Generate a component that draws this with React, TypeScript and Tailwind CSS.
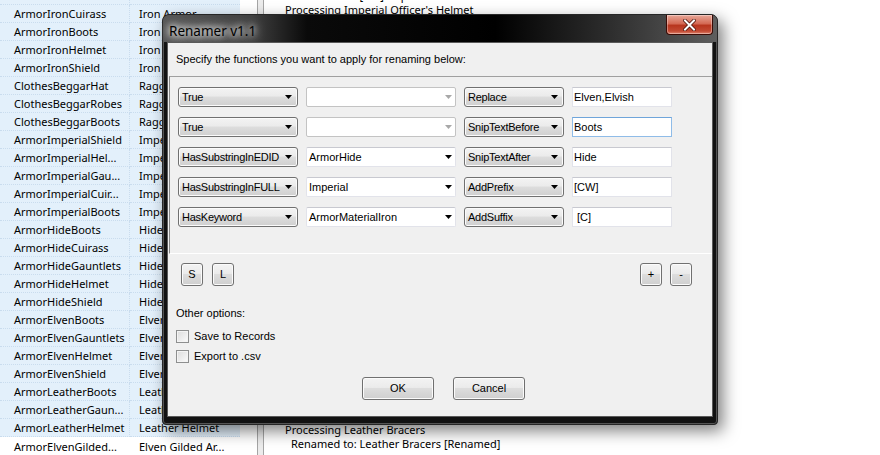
import React from 'react';

const rows: [string, string][] = [
  ['ArmorIronCuirass', 'Iron Armor'],
  ['ArmorIronBoots', 'Iron Boots'],
  ['ArmorIronHelmet', 'Iron Helmet'],
  ['ArmorIronShield', 'Iron Shield'],
  ['ClothesBeggarHat', 'Ragged Cap'],
  ['ClothesBeggarRobes', 'Ragged Robes'],
  ['ClothesBeggarBoots', 'Ragged Boots'],
  ['ArmorImperialShield', 'Imperial Shield'],
  ['ArmorImperialHel...', 'Imperial Helmet'],
  ['ArmorImperialGau...', 'Imperial Bracers'],
  ['ArmorImperialCuir...', 'Imperial Armor'],
  ['ArmorImperialBoots', 'Imperial Boots'],
  ['ArmorHideBoots', 'Hide Boots'],
  ['ArmorHideCuirass', 'Hide Armor'],
  ['ArmorHideGauntlets', 'Hide Bracers'],
  ['ArmorHideHelmet', 'Hide Helmet'],
  ['ArmorHideShield', 'Hide Shield'],
  ['ArmorElvenBoots', 'Elven Boots'],
  ['ArmorElvenGauntlets', 'Elven Gauntlets'],
  ['ArmorElvenHelmet', 'Elven Helmet'],
  ['ArmorElvenShield', 'Elven Shield'],
  ['ArmorLeatherBoots', 'Leather Boots'],
  ['ArmorLeatherGaun...', 'Leather Bracers'],
  ['ArmorLeatherHelmet', 'Leather Helmet'],
  ['ArmorElvenGilded...', 'Elven Gilded Ar...'],
];

const rules: [string, string, string, string, boolean][] = [
  ['True', '', 'Replace', 'Elven,Elvish', false],
  ['True', '', 'SnipTextBefore', 'Boots', true],
  ['HasSubstringInEDID', 'ArmorHide', 'SnipTextAfter', 'Hide', false],
  ['HasSubstringInFULL', 'Imperial', 'AddPrefix', '[CW]', false],
  ['HasKeyword', 'ArmorMaterialIron', 'AddSuffix', ' [C]', false],
];

const buttonFace =
  'border border-[#707070] rounded-[3px] bg-[linear-gradient(180deg,#f3f3f3_0%,#ebebeb_45%,#dddddd_50%,#cfcfcf_100%)] shadow-[inset_0_0_0_1px_#fbfbfb]';

function Arrow({ color = '#000' }: { color?: string }) {
  return (
    <svg width="7" height="4" viewBox="0 0 7 4" className="shrink-0">
      <polygon points="0,0 7,0 3.5,4" fill={color} />
    </svg>
  );
}

function DropList({ text, width }: { text: string; width: string }) {
  return (
    <div className={`flex h-[20px] ${width} items-center justify-between pl-[3px] pr-[5px] ${buttonFace}`}>
      <span className="whitespace-nowrap tracking-[-0.25px]">{text}</span>
      <Arrow />
    </div>
  );
}

function EditCombo({ text }: { text: string }) {
  const disabled = text === '';
  return (
    <div
      className={`flex h-[20px] w-[150px] items-center justify-between rounded-[2px] border bg-white pl-[2px] pr-[3px] ${
        disabled ? 'border-[#c3c3c3]' : 'border-[#e2e3ea] border-t-[#c8c9d0]'
      }`}
    >
      <span className="whitespace-nowrap">{text}</span>
      <Arrow color={disabled ? '#a8a8a8' : '#000'} />
    </div>
  );
}

function TextBox({ text, focused }: { text: string; focused: boolean }) {
  return (
    <div
      className={`flex h-[20px] w-[100px] items-center border bg-white pl-[1px] ${
        focused ? 'border-[#8fbce8] border-t-[#6fa5da]' : 'border-[#e2e3ea] border-t-[#c8c9d0]'
      }`}
    >
      <span className="whitespace-pre">{text}</span>
    </div>
  );
}

function SmallButton({ label }: { label: string }) {
  return (
    <div className={`flex h-[23px] w-[22px] items-center justify-center ${buttonFace}`}>{label}</div>
  );
}

function CheckBox({ label }: { label: string }) {
  return (
    <div className="flex h-[16px] items-center gap-[5px]">
      <div className="h-[13px] w-[13px] border border-[#8e8f8f] bg-[linear-gradient(135deg,#dcdcdc,#fbfbfb)] shadow-[inset_0_0_0_1px_#f4f4f4]" />
      <span>{label}</span>
    </div>
  );
}

function Dialog() {
  return (
    <div className="absolute left-[162px] top-[14px] flex h-[411px] w-[556px] flex-col rounded-t-[7px] rounded-b-[4px] border border-[#262626] bg-[#121212] shadow-[inset_0_0_0_1px_rgba(255,255,255,0.28),5px_6px_16px_rgba(0,0,0,0.5)]">
      <div className="flex h-[27px] justify-between rounded-t-[6px] bg-[linear-gradient(90deg,#555_0%,#404040_16%,#0a0a0a_26%,#000_60%,#2c2c2c_80%,#5e5e5e_100%)] pl-[6px] pr-[4px]">
        <span className="pt-[8px] text-[13.5px] leading-[16px] text-black [text-shadow:0_0_6px_#fff,0_0_10px_#fff,0_0_14px_#ddd]">
          Renamer v1.1
        </span>
        <div className="flex h-[20px] w-[47px] items-center justify-center rounded-b-[4px] border border-t-0 border-[#3b0b05] bg-[linear-gradient(180deg,#e8a899_0%,#d46a55_45%,#b8361f_55%,#c24a33_85%,#e08570_100%)] shadow-[inset_0_0_0_1px_rgba(255,255,255,0.35)]">
          <svg width="13" height="12" viewBox="0 0 13 12">
            <path d="M2 1.5 L11 10.5 M11 1.5 L2 10.5" stroke="#4a1208" strokeWidth="3.6" strokeLinecap="square" />
            <path d="M2 1.5 L11 10.5 M11 1.5 L2 10.5" stroke="#fff" strokeWidth="2" strokeLinecap="square" />
          </svg>
        </div>
      </div>
      <div className="mx-[4px] flex h-[375px] flex-col border border-[#5a5a5a] bg-[#f0f0f0] [font-family:'Liberation_Sans',Arial,sans-serif]">
        <div className="flex h-[33px] items-center pl-[8px]">Specify the functions you want to apply for renaming below:</div>
        <div className="ml-[1px] flex h-[178px] flex-col gap-[10px] border-l border-t border-b border-l-[#868686] border-t-[#a0a0a0] border-b-white pl-[8px] pt-[10px]">
          {rules.map(([cond, arg, fn, val, focused], i) => (
            <div key={i} className="flex gap-[8px]">
              <DropList text={cond} width="w-[120px]" />
              <EditCombo text={arg} />
              <DropList text={fn} width="w-[100px]" />
              <TextBox text={val} focused={focused} />
            </div>
          ))}
        </div>
        <div className="mt-[9px] flex justify-between pl-[13px] pr-[20px]">
          <div className="flex gap-[9px]">
            <SmallButton label="S" />
            <SmallButton label="L" />
          </div>
          <div className="flex gap-[8px]">
            <SmallButton label="+" />
            <SmallButton label="-" />
          </div>
        </div>
        <div className="mt-[20px] pl-[8px] leading-[15px]">Other options:</div>
        <div className="mt-[7px] flex flex-col gap-[4px] pl-[8px]">
          <CheckBox label="Save to Records" />
          <CheckBox label="Export to .csv" />
        </div>
        <div className="mt-[13px] flex gap-[19px] pl-[194px]">
          <div className={`flex h-[23px] w-[72px] items-center justify-center ${buttonFace}`}>OK</div>
          <div className={`flex h-[23px] w-[72px] items-center justify-center ${buttonFace}`}>Cancel</div>
        </div>
      </div>
    </div>
  );
}

export default function App() {
  return (
    <div className="relative flex h-[455px] w-[880px] overflow-hidden bg-white text-[11px] leading-[15px] text-black [font-family:'Noto_Sans',sans-serif]">
      <div className="flex w-[257px] flex-col">
        <div className="flex h-[5px]">
          <div className="w-[130px] border-r border-b border-dotted border-[#c9dcee] bg-[#e3f0fb]" />
          <div className="w-[110px] border-b border-dotted border-[#c9dcee] bg-[#e3f0fb]" />
        </div>
        {rows.map(([edid, name], i) => {
          const last = i === rows.length - 1;
          const bg = last ? 'bg-white' : 'bg-[#e3f0fb]';
          return (
            <div key={edid + i} className="flex h-[18px]">
              <div
                className={`flex w-[130px] items-center overflow-hidden whitespace-nowrap pl-[14px] ${bg} ${
                  last ? '' : 'border-r border-b border-dotted border-[#c9dcee]'
                }`}
              >
                {edid}
              </div>
              <div
                className={`flex w-[110px] items-center overflow-hidden whitespace-nowrap pl-[9px] ${bg} ${
                  last ? '' : 'border-b border-dotted border-[#c9dcee]'
                }`}
              >
                {name}
              </div>
            </div>
          );
        })}
      </div>
      <div className="w-[7px] border-x border-[#a5a5a5] bg-[#ececec]" />
      <div className="flex flex-1 flex-col pl-[21px] leading-[14px]">
        <div className="mt-[-11px]">
          <div className="pl-[6px]">Renamed to: [CW] Imperial Officer's Boots</div>
          <div>Processing Imperial Officer's Helmet</div>
          <div className="pl-[6px]">Renamed to: [CW] Imperial Officer's Helmet</div>
        </div>
        <div className="mt-auto pb-[4px]">
          <div>Processing Leather Bracers</div>
          <div className="pl-[6px]">Renamed to: Leather Bracers [Renamed]</div>
        </div>
      </div>
      <Dialog />
    </div>
  );
}
